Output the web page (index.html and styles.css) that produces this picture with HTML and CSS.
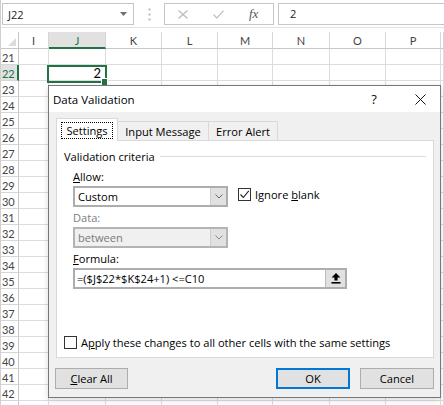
FILE: index.html
```html
<!DOCTYPE html>
<html>
<head>
<meta charset="utf-8">
<link rel="stylesheet" href="styles.css">
</head>
<body>
<div class="xl">
  <div class="fbar">
    <div class="namebox"><span class="nb-text">J22</span><svg class="nb-arrow" width="7" height="4" viewBox="0 0 7 4"><path d="M0 0H7L3.5 4Z" fill="#6f6f6f"/></svg></div>
    <div class="grip"><svg width="3" height="13" viewBox="0 0 3 13"><rect x="0.5" y="0.5" width="2" height="2" fill="#b9b9b9"/><rect x="0.5" y="5.5" width="2" height="2" fill="#b9b9b9"/><rect x="0.5" y="10.5" width="2" height="2" fill="#b9b9b9"/></svg></div>
    <div class="fxbox">
      <svg class="fx-cancel" width="10" height="9" viewBox="0 0 10 9"><path d="M0.5 0.5L9.5 8.5M9.5 0.5L0.5 8.5" stroke="#b8b8b8" stroke-width="1.1" fill="none"/></svg>
      <svg class="fx-enter" width="11" height="9" viewBox="0 0 11 9"><path d="M0.5 4.5L3.8 8L10.5 0.8" stroke="#c4c4c4" stroke-width="1.3" fill="none"/></svg>
      <span class="fx-label">fx</span>
    </div>
    <div class="formula">2</div>
  </div>

  <div class="sheet">
    <span class="corner"><svg width="8" height="8" viewBox="0 0 8 8"><path d="M8 0V8H0Z" fill="#dcdcdc"/></svg></span><span class="ch">I</span><span class="ch sel">J</span><span class="ch">K</span><span class="ch">L</span><span class="ch">M</span><span class="ch">N</span><span class="ch">O</span><span class="ch">P</span><span class="ch"></span>
    <span class="rh">21</span><span></span><span></span><span></span><span></span><span></span><span></span><span></span><span></span><span></span>
    <span class="rh sel">22</span><span></span><span class="num">2</span><span></span><span></span><span></span><span></span><span></span><span></span><span></span>
    <span class="rh">23</span><span></span><span></span><span></span><span></span><span></span><span></span><span></span><span></span><span></span>
    <span class="rh">24</span><span></span><span></span><span></span><span></span><span></span><span></span><span></span><span></span><span></span>
    <span class="rh">25</span><span></span><span></span><span></span><span></span><span></span><span></span><span></span><span></span><span></span>
    <span class="rh">26</span><span></span><span></span><span></span><span></span><span></span><span></span><span></span><span></span><span></span>
    <span class="rh">27</span><span></span><span></span><span></span><span></span><span></span><span></span><span></span><span></span><span></span>
    <span class="rh">28</span><span></span><span></span><span></span><span></span><span></span><span></span><span></span><span></span><span></span>
    <span class="rh">29</span><span></span><span></span><span></span><span></span><span></span><span></span><span></span><span></span><span></span>
    <span class="rh">30</span><span></span><span></span><span></span><span></span><span></span><span></span><span></span><span></span><span></span>
    <span class="rh">31</span><span></span><span></span><span></span><span></span><span></span><span></span><span></span><span></span><span></span>
    <span class="rh">32</span><span></span><span></span><span></span><span></span><span></span><span></span><span></span><span></span><span></span>
    <span class="rh">33</span><span></span><span></span><span></span><span></span><span></span><span></span><span></span><span></span><span></span>
    <span class="rh">34</span><span></span><span></span><span></span><span></span><span></span><span></span><span></span><span></span><span></span>
    <span class="rh">35</span><span></span><span></span><span></span><span></span><span></span><span></span><span></span><span></span><span></span>
    <span class="rh">36</span><span></span><span></span><span></span><span></span><span></span><span></span><span></span><span></span><span></span>
    <span class="rh">37</span><span></span><span></span><span></span><span></span><span></span><span></span><span></span><span></span><span></span>
    <span class="rh">38</span><span></span><span></span><span></span><span></span><span></span><span></span><span></span><span></span><span></span>
    <span class="rh">39</span><span></span><span></span><span></span><span></span><span></span><span></span><span></span><span></span><span></span>
    <span class="rh">40</span><span></span><span></span><span></span><span></span><span></span><span></span><span></span><span></span><span></span>
    <span class="rh">41</span><span></span><span></span><span></span><span></span><span></span><span></span><span></span><span></span><span></span>
    <span class="rh">42</span><span></span><span></span><span></span><span></span><span></span><span></span><span></span><span></span><span></span>
    <span class="rh"></span><span></span><span></span><span></span><span></span><span></span><span></span><span></span><span></span><span></span>
  </div>

  <div class="selection"></div>
  <div class="fill-handle"></div>

  <div class="dialog">
    <div class="dlg-title">
      <span class="dlg-caption">Data Validation</span>
      <span class="dlg-help">?</span>
      <span class="dlg-close"><svg width="11" height="11" viewBox="0 0 11 11"><path d="M0.5 0.5L10.5 10.5M10.5 0.5L0.5 10.5" stroke="#111" stroke-width="1" fill="none"/></svg></span>
    </div>
    <div class="dlg-body">
      <div class="tabs">
        <div class="tab tab-settings active"><span class="focus">Settings</span></div>
        <div class="tab tab-input">Input Message</div>
        <div class="tab tab-error">Error Alert</div>
      </div>
      <div class="panel">
        <div class="group-head"><span>Validation criteria</span><span class="rule"></span></div>
        <div class="field">
          <div class="lbl"><u>A</u>llow:</div>
          <div class="row">
            <div class="combo"><span class="combo-text">Custom</span><span class="drop"><svg width="8" height="5" viewBox="0 0 8 5"><path d="M0.5 0.5L4 4L7.5 0.5" stroke="#6a6a6a" stroke-width="1" fill="none"/></svg></span></div>
            <div class="check check-ignore"><span class="box"><svg width="11" height="11" viewBox="0 0 11 11"><path d="M1.5 5.5L4.3 8.5L9.8 1.8" stroke="#222" stroke-width="1.1" fill="none"/></svg></span><span>Ignore <u>b</u>lank</span></div>
          </div>
        </div>
        <div class="field">
          <div class="lbl disabled-text">Data:</div>
          <div class="combo disabled"><span class="combo-text">between</span><span class="drop"><svg width="8" height="5" viewBox="0 0 8 5"><path d="M0.5 0.5L4 4L7.5 0.5" stroke="#8a8a8a" stroke-width="1" fill="none"/></svg></span></div>
        </div>
        <div class="field">
          <div class="lbl"><u>F</u>ormula:</div>
          <div class="input"><span class="input-text">=($J$22*$K$24+1) &lt;=C10</span><span class="collapse"><svg width="10" height="11" viewBox="0 0 10 11"><path d="M5 0L9.5 4.6H6.6V7.6H3.4V4.6H0.5Z" fill="#000"/><rect x="0.5" y="9" width="9" height="1.6" fill="#000"/></svg></span></div>
        </div>
        <div class="check check-apply"><span class="box"></span><span>A<u>p</u>ply these changes to all other cells with the same settings</span></div>
      </div>
      <div class="buttons">
        <button class="btn btn-clear"><u>C</u>lear All</button>
        <button class="btn btn-ok">OK</button>
        <button class="btn btn-cancel">Cancel</button>
      </div>
    </div>
  </div>
</div>
</body>
</html>
```

FILE: styles.css
```css
html, body {
  margin: 0;
  padding: 0;
  width: 444px;
  height: 405px;
  overflow: hidden;
  background: #fff;
}

.xl {
  position: relative;
  width: 444px;
  height: 405px;
  box-sizing: border-box;
  border-left: 1px solid #d0d0d0;
  overflow: hidden;
  font-family: Lato, "Open Sans", sans-serif;
  color: #444;
}

/* ---------- formula bar ---------- */
.fbar {
  display: flex;
  align-items: flex-start;
  height: 28px;
  padding-top: 3px;
  box-sizing: border-box;
  border-bottom: 1px solid #e3e3e3;
  margin-bottom: 4px;
  font-family: "Open Sans", sans-serif;
  font-size: 11.1px;
  color: #222;
}

.namebox {
  margin-left: 1px;
  width: 132px;
  height: 22px;
  box-sizing: border-box;
  border: 1px solid #c6c6c6;
  display: flex;
  align-items: center;
  padding-left: 5px;
  padding-right: 6px;
}

.nb-text { flex: 1; }
.nb-arrow { display: block; }

.grip {
  width: 30px;
  height: 22px;
  display: flex;
  align-items: center;
  justify-content: center;
}

.fxbox {
  width: 110px;
  height: 22px;
  box-sizing: border-box;
  border: 1px solid #c6c6c6;
  display: flex;
  align-items: center;
  padding-left: 13px;
}

.fx-cancel { display: block; }
.fx-enter { display: block; margin-left: 25px; }
.fx-label {
  margin-left: 25px;
  font-family: "Liberation Serif", serif;
  font-style: italic;
  font-size: 13px;
  color: #555;
}

.formula {
  flex: 1;
  margin-left: 4px;
  height: 22px;
  box-sizing: border-box;
  border: 1px solid #c6c6c6;
  border-right: none;
  padding-left: 11px;
  line-height: 20px;
}

/* ---------- sheet grid ---------- */
.sheet {
  display: grid;
  grid-template-columns: 18px 30px 57px 56px 56px 55px 57px 56px 55px 1fr;
  grid-template-rows: 17px;
  grid-auto-rows: 16px;
  font-size: 11px;
}

.sheet > span {
  box-sizing: border-box;
  border-right: 1px solid #dcdcdc;
  border-bottom: 1px solid #dcdcdc;
}

.sheet > .corner {
  border-right-color: #c8c8c8;
  border-bottom-color: #c8c8c8;
  display: flex;
  align-items: flex-end;
  justify-content: flex-end;
  padding: 0 2px 2px 0;
}

.sheet > .ch {
  text-align: center;
  line-height: 17px;
  color: #444;
  border-right-color: #d6d6d6;
  border-bottom-color: #c8c8c8;
}

.sheet > .ch.sel {
  background: #e1e1e1;
  color: #217346;
  border-bottom: 2px solid #217346;
}

.sheet > .rh {
  padding-left: 1px;
  padding-top: 1px;
  line-height: 15px;
  letter-spacing: -0.2px;
  color: #444;
  border-right-color: #c8c8c8;
  border-bottom-color: #d6d6d6;
}

.sheet > .rh.sel {
  background: #e1e1e1;
  color: #217346;
  border-right: 2px solid #217346;
}

.sheet > .num {
  text-align: right;
  padding-right: 4px;
  padding-top: 1px;
  font-size: 13px;
  line-height: 15px;
  color: #000;
}

.selection {
  position: absolute;
  left: 46px;
  top: 65px;
  width: 60px;
  height: 18px;
  box-sizing: border-box;
  border: 2px solid #217346;
}

.fill-handle {
  position: absolute;
  left: 100px;
  top: 78px;
  width: 7px;
  height: 8px;
  box-sizing: border-box;
  border: 1px solid #fff;
  background: #217346;
}

/* ---------- dialog ---------- */
.dialog {
  position: absolute;
  left: 47px;
  top: 85px;
  width: 393px;
  height: 313px;
  box-sizing: border-box;
  border: 1px solid #777;
  background: #f0f0f0;
  box-shadow: 0 2px 6px rgba(0, 0, 0, 0.15);
  display: flex;
  flex-direction: column;
  font-family: "Open Sans", sans-serif;
  font-size: 11.1px;
  color: #000;
}

.dlg-title {
  height: 26px;
  flex: none;
  background: #fff;
  display: flex;
  align-items: center;
  padding-left: 4px;
  padding-right: 5px;
}

.dlg-caption { font-size: 11.5px; }

.dlg-help {
  margin-left: auto;
  width: 30px;
  text-align: center;
  font-size: 13px;
  color: #111;
}

.dlg-close {
  margin-left: 16px;
  width: 30px;
  display: flex;
  justify-content: center;
}

.dlg-body {
  flex: 1;
  display: flex;
  flex-direction: column;
  padding: 6px 6px 8px 7px;
}

.tabs {
  display: flex;
  align-items: flex-end;
  height: 22px;
  position: relative;
  z-index: 1;
}

.tab {
  height: 19px;
  box-sizing: border-box;
  border: 1px solid #d9d9d9;
  border-bottom: none;
  background: #f0f0f0;
  display: flex;
  align-items: center;
  justify-content: center;
  margin-left: -1px;
}

.tab-settings { width: 62px; margin-left: 0; }
.tab-input { width: 92px; }
.tab-error { width: 70px; }

.tab.active {
  height: 23px;
  margin-bottom: -1px;
  background: #fff;
  position: relative;
  z-index: 1;
}

.focus {
  border: 1px dotted #000;
  padding: 0 4px;
  line-height: 15px;
}

.panel {
  height: 218px;
  flex: none;
  box-sizing: border-box;
  background: #fff;
  border: 1px solid #d9d9d9;
  padding: 8px 7px 7px 7px;
  display: flex;
  flex-direction: column;
}

.group-head {
  display: flex;
  align-items: center;
  height: 15px;
  line-height: 15px;
}

.rule {
  flex: 1;
  height: 1px;
  margin-left: 5px;
  background: #dcdcdc;
}

.field { margin-left: 9px; }

.lbl {
  line-height: 15px;
  margin-top: 5px;
  margin-bottom: 2px;
}

.field + .field .lbl { margin-top: 3px; }

.disabled-text { color: #7d7d7d; }

.row {
  display: flex;
  align-items: flex-start;
}

.combo {
  width: 155px;
  height: 21px;
  box-sizing: border-box;
  border: 2px solid #adadad;
  background: #fff;
  display: flex;
}

.combo-text {
  flex: 1;
  padding-left: 3px;
  line-height: 17px;
}

.drop {
  width: 15px;
  background: #e1e1e1;
  border-left: 1px solid #cfcfcf;
  display: flex;
  align-items: center;
  justify-content: center;
}

.combo.disabled {
  background: #f0f0f0;
  border-color: #b4b4b4;
  color: #7a7a7a;
}

.input {
  width: 274px;
  height: 21px;
  box-sizing: border-box;
  border: 2px solid #adadad;
  background: #fff;
  display: flex;
}

.input-text {
  flex: 1;
  padding-left: 2px;
  line-height: 17px;
}

.collapse {
  width: 19px;
  background: #e1e1e1;
  border-left: 1px solid #bdbdbd;
  display: flex;
  align-items: center;
  justify-content: center;
}

.check {
  display: flex;
  align-items: center;
  line-height: 15px;
}

.check .box {
  width: 13px;
  height: 13px;
  box-sizing: border-box;
  border: 1px solid #333;
  background: #fff;
  display: flex;
  align-items: center;
  justify-content: center;
  margin-right: 4px;
}

.check-ignore { margin-left: 10px; margin-top: 1px; }

.check-apply { margin-top: auto; }

.buttons {
  display: flex;
  margin-top: 10px;
  height: 21px;
}

.btn {
  font: inherit;
  color: #000;
  width: 74px;
  height: 21px;
  box-sizing: border-box;
  border: 1px solid #adadad;
  background: #e1e1e1;
  padding: 0;
  margin: 0;
}

.btn-clear { width: 73px; margin-left: -1px; margin-right: auto; }
.btn-ok { border: 2px solid #0078d7; }
.btn-cancel { margin-left: 10px; }
```
